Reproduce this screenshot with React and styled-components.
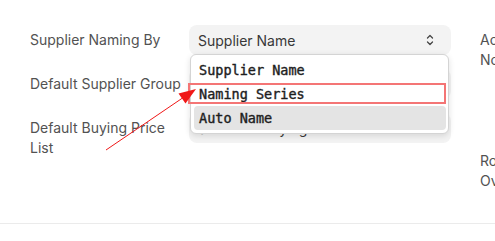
import React from 'react';
import styled, { createGlobalStyle } from 'styled-components';

const GlobalStyle = createGlobalStyle`
  html, body {
    margin: 0;
    padding: 0;
    background: #ffffff;
    overflow: hidden;
  }

  body {
    font-family: Inter, "Noto Sans", sans-serif;
    -webkit-font-smoothing: antialiased;
  }
`;

const Page = styled.div`
  position: relative;
  width: 495px;
  height: 241px;
  overflow: hidden;
`;

const Section = styled.section`
  display: flex;
  gap: 29px;
  height: 224px;
  padding: 25px 0 0 30px;
  box-sizing: border-box;
  border-bottom: 1px solid #ebebeb;
`;

const Column = styled.div`
  display: flex;
  flex-direction: column;
  flex-shrink: 0;
  width: ${({ width }) => width}px;
`;

const Field = styled.div`
  display: flex;
  align-items: flex-start;
  margin-bottom: ${({ gap }) => gap || 14}px;
`;

const Label = styled.label`
  flex-shrink: 0;
  width: ${({ width }) => width || 155}px;
  margin-right: ${({ width }) => (width ? 0 : 4)}px;
  padding-top: 5px;
  font-size: 14px;
  line-height: 20px;
  color: #525252;
`;

const Control = styled.div`
  display: flex;
  align-items: center;
  justify-content: space-between;
  width: 262px;
  height: 30px;
  padding: 0 17px 0 9px;
  box-sizing: border-box;
  background: #f3f3f3;
  border-radius: 8px;
  font-size: 14px;
  color: #383838;
`;

const Dropdown = styled.ul`
  position: absolute;
  left: 190px;
  top: 54px;
  width: 259px;
  margin: 0;
  padding: 3px 0;
  box-sizing: border-box;
  list-style: none;
  background: #ffffff;
  border: 1px solid #d4d4d4;
  border-radius: 6px;
  box-shadow: 0 2px 6px rgba(0, 0, 0, 0.12);
  z-index: 2;
`;

const Option = styled.li`
  height: 24px;
  margin: 0 2px 0 3px;
  padding-left: 5px;
  border-radius: 4px;
  background: ${({ active }) => (active ? '#e4e4e4' : 'transparent')};
  font-family: "DejaVu Sans Mono", "Liberation Mono", monospace;
  font-size: 13.5px;
  line-height: 24px;
  color: #1e1e1e;
  -webkit-text-stroke: 0.4px #1e1e1e;
`;

const Highlight = styled.div`
  position: absolute;
  left: 188px;
  top: 83px;
  width: 258px;
  height: 21px;
  border: 2px solid #f47575;
  box-sizing: border-box;
  z-index: 3;
`;

const Annotation = styled.svg`
  position: absolute;
  left: 0;
  top: 0;
  z-index: 4;
  pointer-events: none;
`;

function Chevrons() {
  return (
    <svg width="8" height="12" viewBox="0 0 8 12" fill="none">
      <path d="M1.5 4 L4 1.5 L6.5 4" stroke="#444" strokeWidth="1.3" strokeLinecap="round" strokeLinejoin="round" />
      <path d="M1.5 8 L4 10.5 L6.5 8" stroke="#444" strokeWidth="1.3" strokeLinecap="round" strokeLinejoin="round" />
    </svg>
  );
}

const options = ['Supplier Name', 'Naming Series', 'Auto Name'];

export default function App() {
  return (
    <Page>
      <GlobalStyle />
      <Section>
        <Column width={421}>
          <Field>
            <Label>Supplier Naming By</Label>
            <Control>
              <span>Supplier Name</span>
              <Chevrons />
            </Control>
          </Field>
          <Field>
            <Label>Default Supplier Group</Label>
            <Control>
              <span>All Supplier Groups</span>
            </Control>
          </Field>
          <Field>
            <Label>Default Buying Price List</Label>
            <Control>
              <span>Standard Buying</span>
            </Control>
          </Field>
        </Column>
        <Column width={155}>
          <Field gap={76}>
            <Label width={155}>Action If Same Rate is Not Maintained</Label>
          </Field>
          <Field>
            <Label width={155}>Role Allowed to Override Stop Action</Label>
          </Field>
        </Column>
      </Section>

      <Dropdown>
        {options.map((opt) => (
          <Option key={opt} active={opt === 'Auto Name'}>
            {opt}
          </Option>
        ))}
      </Dropdown>
      <Highlight />

      <Annotation width="495" height="241">
        <line x1="106" y1="150" x2="184" y2="97" stroke="#f01818" strokeWidth="1" />
        <polygon points="196,89 178.5,93.5 185.5,103.5" fill="#f01818" />
      </Annotation>
    </Page>
  );
}
